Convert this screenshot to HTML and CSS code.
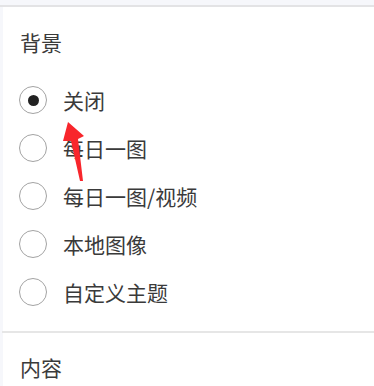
FILE: index.html
```html
<!DOCTYPE html>
<html lang="zh-CN">
<head>
<meta charset="utf-8">
<link rel="stylesheet" href="styles.css">
</head>
<body>
<div class="topline"></div>
<div class="panel">
  <section class="section">
    <div class="title">背景</div>
    <div class="options">
      <label class="option"><span class="radio checked"></span><span class="label">关闭</span></label>
      <label class="option"><span class="radio"></span><span class="label">每日一图</span></label>
      <label class="option"><span class="radio"></span><span class="label">每日一图/视频</span></label>
      <label class="option"><span class="radio"></span><span class="label">本地图像</span></label>
      <label class="option"><span class="radio"></span><span class="label">自定义主题</span></label>
    </div>
  </section>
  <section class="section next">
    <div class="title">内容</div>
  </section>
</div>
<svg class="arrow" width="30" height="70" viewBox="0 0 30 70">
  <polygon points="8,4 24,18 18,21 23,63 20,63 11,23 3,23" fill="#f8262c"/>
</svg>
</body>
</html>
```
FILE: styles.css
```css
html, body {
  margin: 0;
  padding: 0;
}
body {
  background: #f6f7fb;
  font-family: "Noto Sans CJK SC", "Noto Sans", sans-serif;
  color: #3a3a3a;
  width: 374px;
  height: 386px;
  overflow: hidden;
  position: relative;
  padding-top: 5px;
  box-sizing: border-box;
  display: flex;
  flex-direction: column;
}
.topline {
  height: 2px;
  background: #e3e3e5;
  flex: none;
}
.panel {
  margin-left: 3px;
  background: #fff;
  flex: 1;
  min-height: 0;
}
.section {
  padding: 20px 0 0 17px;
}
.title {
  font-size: 21px;
  line-height: 30px;
  height: 30px;
}
.options {
  margin-top: 19px;
  margin-left: -18px;
  padding-left: 17px;
  padding-bottom: 15px;
  border-bottom: 2px solid #e6e6e6;
}
.option {
  display: flex;
  align-items: center;
  height: 48px;
}
.radio {
  width: 28px;
  height: 28px;
  box-sizing: border-box;
  border: 1.5px solid #a3a3a3;
  border-radius: 50%;
  display: flex;
  align-items: center;
  justify-content: center;
  flex: none;
}
.radio.checked::after {
  content: "";
  width: 11px;
  height: 11px;
  border-radius: 50%;
  background: #222;
}
.label {
  margin-left: 16px;
  font-size: 21px;
  line-height: 30px;
}
.next {
  padding-top: 19px;
}
.arrow {
  position: absolute;
  left: 60px;
  top: 118px;
}
```
